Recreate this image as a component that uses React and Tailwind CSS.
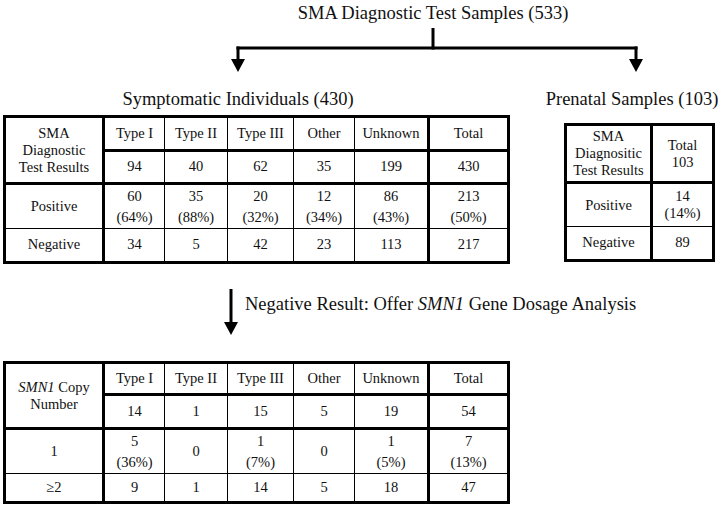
export default function App() {
  const td = "border border-black text-center align-middle p-0";
  return (
    <div className="w-[720px] h-[505px] bg-white text-[#111] overflow-hidden" style={{ fontFamily: '"Liberation Serif", "Times New Roman", serif' }}>
      {/* Title */}
      <div className="h-[28px] pt-[2px] ml-[146px] w-[574px] text-center text-[18.5px] leading-[22px]">
        SMA Diagnostic Test Samples (533)
      </div>

      {/* Connector */}
      <svg width="720" height="46" className="block">
        <rect x="431.5" y="0" width="3" height="21.5" fill="#000" />
        <rect x="236.5" y="18.5" width="401" height="3" fill="#000" />
        <rect x="236.5" y="18.5" width="3" height="14" fill="#000" />
        <polygon points="231,31 245,31 238,44" fill="#000" />
        <rect x="634.5" y="18.5" width="3" height="14" fill="#000" />
        <polygon points="629,31 643,31 636,44" fill="#000" />
      </svg>

      {/* Labels */}
      <div className="flex h-[41px] pt-[15px] text-[18.5px] leading-[21px] whitespace-nowrap">
        <div className="w-[476px] text-center">Symptomatic Individuals (430)</div>
        <div className="ml-[68px] w-[176px] text-center">Prenatal Samples (103)</div>
      </div>

      {/* Upper tables */}
      <div className="flex items-start text-[14.5px]">
        <table className="ml-[3px] table-fixed border-collapse border-[3px] border-black w-[504px]">
          <colgroup>
            <col className="w-[99px]" />
            <col className="w-[61px]" />
            <col className="w-[63px]" />
            <col className="w-[66px]" />
            <col className="w-[61px]" />
            <col className="w-[74px]" />
            <col className="w-[80px]" />
          </colgroup>
          <tbody>
            <tr className="h-[34px] leading-[17px]">
              <td rowSpan={2} className={`${td} border-r-[3px] border-b-[3px]`}>
                SMA<br />Diagnostic<br />Test Results
              </td>
              <td className={`${td} border-b-[3px]`}>Type I</td>
              <td className={`${td} border-b-[3px]`}>Type II</td>
              <td className={`${td} border-b-[3px]`}>Type III</td>
              <td className={`${td} border-b-[3px]`}>Other</td>
              <td className={`${td} border-b-[3px]`}>Unknown</td>
              <td className={`${td} border-b-[3px] border-l-[3px]`}>Total</td>
            </tr>
            <tr className="h-[33px]">
              <td className={`${td} border-b-[3px]`}>94</td>
              <td className={`${td} border-b-[3px]`}>40</td>
              <td className={`${td} border-b-[3px]`}>62</td>
              <td className={`${td} border-b-[3px]`}>35</td>
              <td className={`${td} border-b-[3px]`}>199</td>
              <td className={`${td} border-b-[3px] border-l-[3px]`}>430</td>
            </tr>
            <tr className="h-[45px] leading-[21px]">
              <td className={`${td} border-r-[3px]`}>Positive</td>
              <td className={td}>60<br />(64%)</td>
              <td className={td}>35<br />(88%)</td>
              <td className={td}>20<br />(32%)</td>
              <td className={td}>12<br />(34%)</td>
              <td className={td}>86<br />(43%)</td>
              <td className={`${td} border-l-[3px]`}>213<br />(50%)</td>
            </tr>
            <tr className="h-[34px]">
              <td className={`${td} border-r-[3px]`}>Negative</td>
              <td className={td}>34</td>
              <td className={td}>5</td>
              <td className={td}>42</td>
              <td className={td}>23</td>
              <td className={td}>113</td>
              <td className={`${td} border-l-[3px]`}>217</td>
            </tr>
          </tbody>
        </table>

        <table className="ml-[54px] mt-[8px] table-fixed border-collapse border-[3px] border-black w-[148px]">
          <colgroup>
            <col className="w-[86px]" />
            <col className="w-[62px]" />
          </colgroup>
          <tbody>
            <tr className="h-[58px] leading-[17px]">
              <td className={`${td} border-r-[3px] border-b-[3px]`}>
                SMA<br />Diagnositic<br />Test Results
              </td>
              <td className={`${td} border-b-[3px]`}>Total<br />103</td>
            </tr>
            <tr className="h-[44px] leading-[17px]">
              <td className={`${td} border-r-[3px]`}>Positive</td>
              <td className={td}>14<br />(14%)</td>
            </tr>
            <tr className="h-[34px]">
              <td className={`${td} border-r-[3px]`}>Negative</td>
              <td className={td}>89</td>
            </tr>
          </tbody>
        </table>
      </div>

      {/* Middle arrow */}
      <div className="flex items-start h-[97px] pt-[25px] pl-[224px]">
        <svg width="14" height="46" className="block shrink-0">
          <rect x="5.5" y="0" width="3" height="36" fill="#000" />
          <polygon points="0,33 14,33 7,46" fill="#000" />
        </svg>
        <div className="ml-[7px] mt-[5px] text-[18.5px] leading-[21px] whitespace-nowrap">
          Negative Result: Offer <i>SMN1</i> Gene Dosage Analysis
        </div>
      </div>

      {/* Lower table */}
      <table className="ml-[3px] table-fixed border-collapse border-[3px] border-black w-[504px] text-[14.5px]">
        <colgroup>
          <col className="w-[99px]" />
          <col className="w-[61px]" />
          <col className="w-[63px]" />
          <col className="w-[66px]" />
          <col className="w-[61px]" />
          <col className="w-[74px]" />
          <col className="w-[80px]" />
        </colgroup>
        <tbody>
          <tr className="h-[32px] leading-[17px]">
            <td rowSpan={2} className={`${td} border-r-[3px] border-b-[3px]`}>
              <i>SMN1</i> Copy<br />Number
            </td>
            <td className={`${td} border-b-[3px]`}>Type I</td>
            <td className={`${td} border-b-[3px]`}>Type II</td>
            <td className={`${td} border-b-[3px]`}>Type III</td>
            <td className={`${td} border-b-[3px]`}>Other</td>
            <td className={`${td} border-b-[3px]`}>Unknown</td>
            <td className={`${td} border-b-[3px] border-l-[3px]`}>Total</td>
          </tr>
          <tr className="h-[34px]">
            <td className={`${td} border-b-[3px]`}>14</td>
            <td className={`${td} border-b-[3px]`}>1</td>
            <td className={`${td} border-b-[3px]`}>15</td>
            <td className={`${td} border-b-[3px]`}>5</td>
            <td className={`${td} border-b-[3px]`}>19</td>
            <td className={`${td} border-b-[3px] border-l-[3px]`}>54</td>
          </tr>
          <tr className="h-[45px] leading-[21px]">
            <td className={`${td} border-r-[3px]`}>1</td>
            <td className={td}>5<br />(36%)</td>
            <td className={td}>0</td>
            <td className={td}>1<br />(7%)</td>
            <td className={td}>0</td>
            <td className={td}>1<br />(5%)</td>
            <td className={`${td} border-l-[3px]`}>7<br />(13%)</td>
          </tr>
          <tr className="h-[29px]">
            <td className={`${td} border-r-[3px]`}>≥2</td>
            <td className={td}>9</td>
            <td className={td}>1</td>
            <td className={td}>14</td>
            <td className={td}>5</td>
            <td className={td}>18</td>
            <td className={`${td} border-l-[3px]`}>47</td>
          </tr>
        </tbody>
      </table>
    </div>
  );
}
